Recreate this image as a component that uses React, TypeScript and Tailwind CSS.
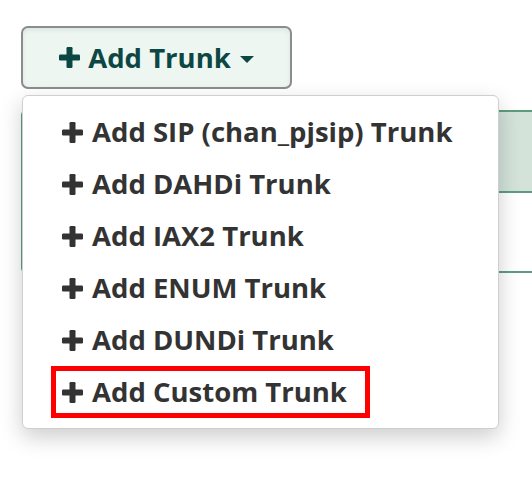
const ITEMS = [
  'Add SIP (chan_pjsip) Trunk',
  'Add DAHDi Trunk',
  'Add IAX2 Trunk',
  'Add ENUM Trunk',
  'Add DUNDi Trunk',
]

function Plus({ className }: { className?: string }) {
  return (
    <svg viewBox="0 0 21 21" className={className} fill="currentColor">
      <rect x="7.5" y="0" width="6" height="21" rx="1.2" />
      <rect x="0" y="7.5" width="21" height="6" rx="1.2" />
    </svg>
  )
}

export default function App() {
  return (
    <div className="relative w-[532px] h-[480px] overflow-hidden bg-white font-['Open_Sans',sans-serif]">
      <div className="pt-[26px] pl-[21px]">
        <button className="flex h-[63px] w-[271px] items-center justify-center rounded-[7px] border-2 border-[#8c8c8c] bg-[#eef6f2] text-[#0c4744] shadow-[inset_0_2px_4px_rgba(0,0,0,0.08)]">
          <Plus className="h-[21px] w-[21px]" />
          <span className="ml-[8px] text-[27.5px] font-bold leading-none">Add Trunk</span>
          <span className="ml-[9px] mt-[3px] h-0 w-0 border-x-[7px] border-t-[7px] border-x-transparent border-t-[#0c4744]" />
        </button>
      </div>

      {/* card behind the menu */}
      <div className="ml-[21px] mt-[21px] h-[163px] w-[620px] overflow-hidden rounded-[5px] border-2 border-[#5e9c7f]">
        <div className="h-[81px] border-b-2 border-[#5e9c7f] bg-[#d3e3da]" />
      </div>

      <div className="absolute left-[22px] top-[95px] w-[477px] rounded-[6px] border border-[#cfcfcf] bg-white pb-[10px] pt-[10px] shadow-[0_8px_22px_rgba(0,0,0,0.2)]">
        {ITEMS.map(label => (
          <div key={label} className="flex h-[52px] items-center pl-[39px] text-[#333333]">
            <Plus className="h-[21px] w-[21px]" />
            <span className="ml-[9px] text-[27.5px] font-bold leading-none">{label}</span>
          </div>
        ))}
        <div className="flex h-[52px] items-center pl-[28px] text-[#333333]">
          <div className="flex h-[52px] items-center border-[5px] border-[#ff0000] pl-[6px] pr-[18px]">
            <Plus className="h-[21px] w-[21px]" />
            <span className="ml-[9px] text-[27.5px] font-bold leading-none">Add Custom Trunk</span>
          </div>
        </div>
      </div>
    </div>
  )
}
